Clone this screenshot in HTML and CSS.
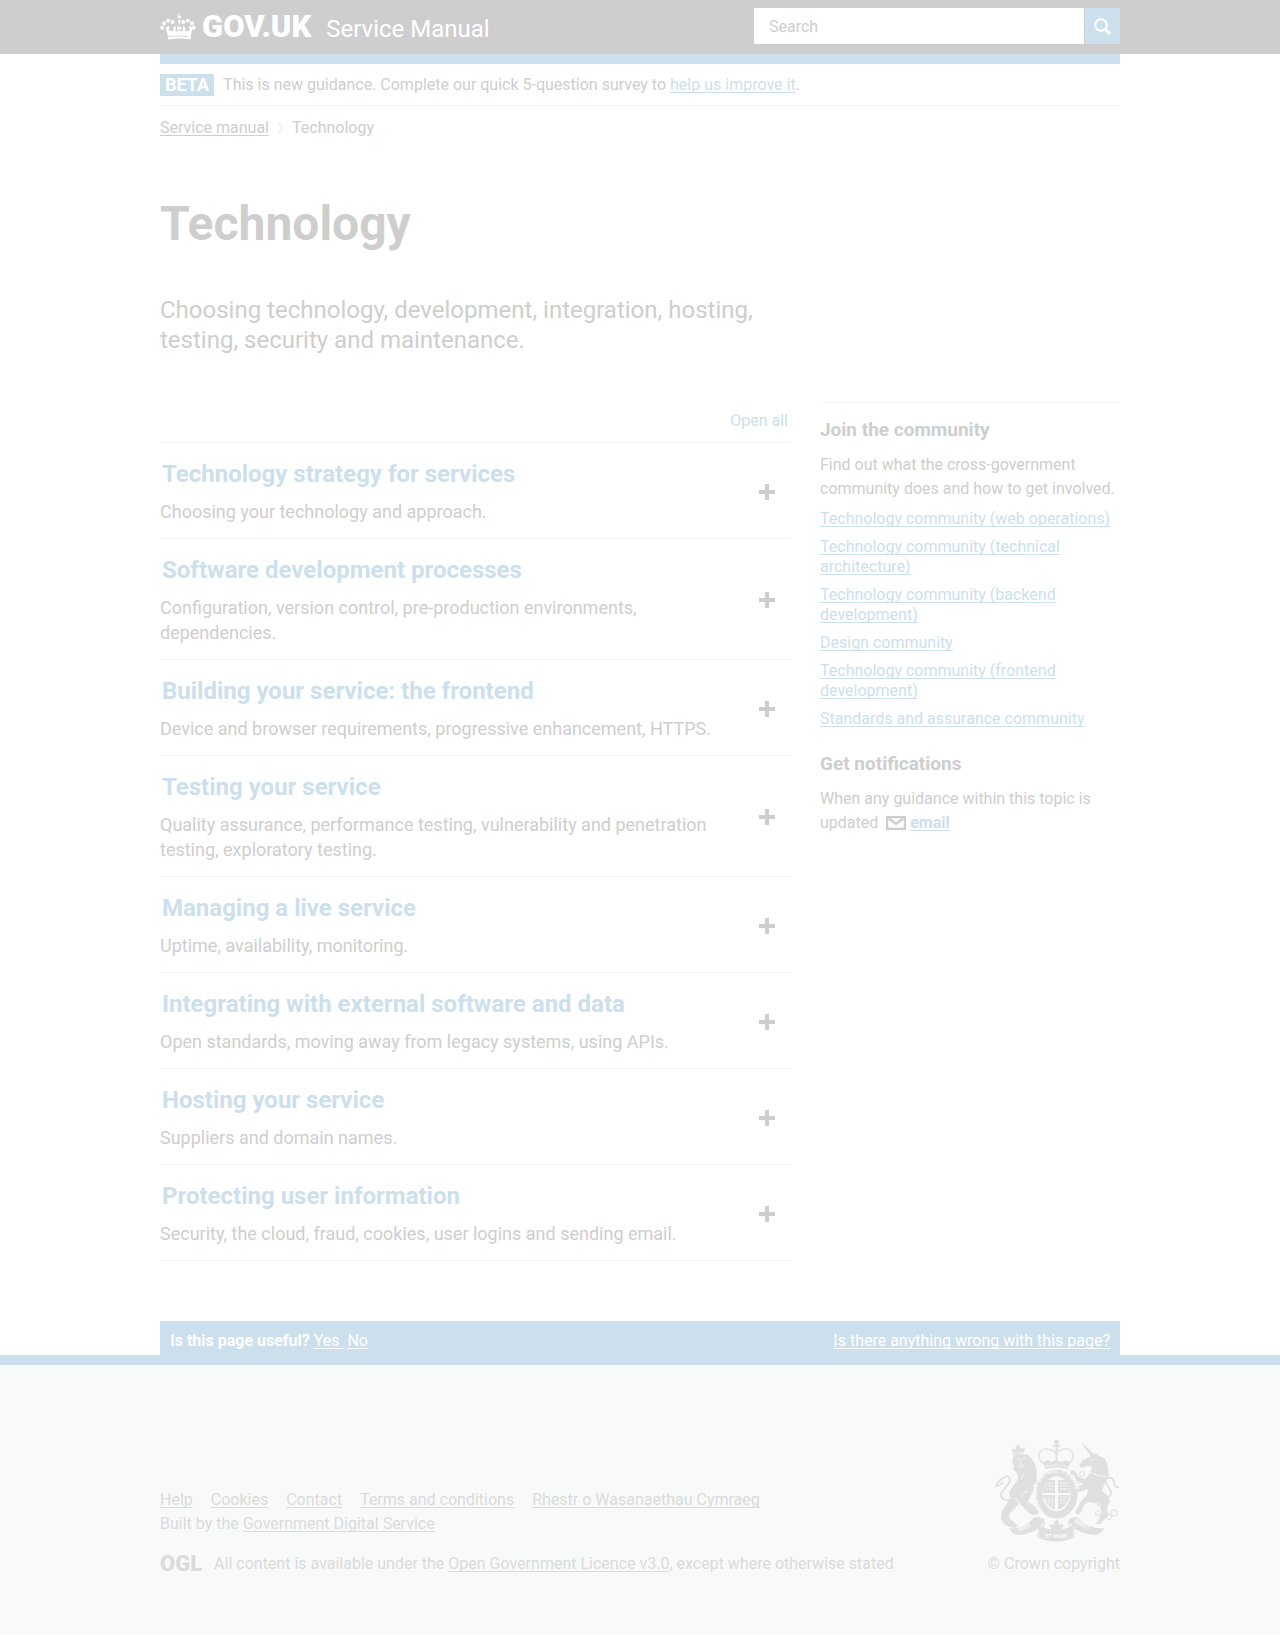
FILE: index.html
```html
<!DOCTYPE html>
<html lang="en">
<head>
<meta charset="utf-8">
<meta name="viewport" content="width=device-width, initial-scale=1">
<title>Technology - Service Manual - GOV.UK</title>
<link rel="stylesheet" href="styles.css">
</head>
<body>
<header class="header">
  <div class="container header-inner">
    <a class="brand" href="#">
      <svg class="crown" viewBox="0 0 36 27" aria-hidden="true">
        <g fill="currentColor">
          <circle cx="2.3" cy="13.7" r="2"/><circle cx="4" cy="9.3" r="2"/><circle cx="8.2" cy="6.8" r="2"/><circle cx="12.7" cy="8" r="1.9"/>
          <circle cx="33.7" cy="13.7" r="2"/><circle cx="32" cy="9.3" r="2"/><circle cx="27.8" cy="6.8" r="2"/><circle cx="23.3" cy="8" r="1.9"/>
          <path d="M16.8 0h2.400l-.5 2.200 2.300-.6v2.500l-2.300-.5.5 2.200c1 .4 1.500 1.100 1.500 2 0 1.100-.7 1.800-1.700 2.100l.4 3.300 1.900-1v3.800l-1.700-1c-.1 1.400.7 2.500 1.900 2.500 1.400 0 2.100-1.100 1.800-2.500l-1.100.2 1.300-3.400 2.500 2.700-1.100.1c0 1.500.7 2.700 2.200 2.700 1.700 0 2.700-1.200 2.900-2.800l-1.500.3 1.400-3.300 3 2.700c-1.300 2.500-2 7.200-2.600 11.300-3.400-.7-7-.9-11-.9s-7.600.2-11 .9c-.6-4.100-1.300-8.800-2.600-11.300l3-2.700 1.400 3.300-1.500-.3c.2 1.600 1.200 2.800 2.900 2.800 1.500 0 2.200-1.200 2.200-2.700l-1.100-.1 2.500-2.700 1.300 3.400-1.100-.2c-.3 1.400.4 2.500 1.800 2.500 1.200 0 2-1.100 1.900-2.500l-1.700 1v-3.800l1.900 1 .4-3.300c-1-.3-1.700-1-1.700-2.100 0-.9.5-1.600 1.500-2l.5-2.200-2.300.5V1.600l2.300.6z"/>
        </g>
        <path d="M7 22.800q11-1.700 22 0" fill="none" stroke="#cecece" stroke-width=".8"/>
      </svg>
      <span class="brand-name">GOV.UK</span>
    </a>
    <a class="product" href="#">Service Manual</a>
    <form class="search" role="search">
      <input class="search-input" type="search" placeholder="Search" aria-label="Search">
      <button class="search-button" type="button" aria-label="Search">
        <svg width="17" height="17" viewBox="0 0 17 17" fill="none" stroke="currentColor" aria-hidden="true"><circle cx="7" cy="7" r="5.800" stroke-width="2"/><path d="M11 11l5 5" stroke-width="3"/></svg>
      </button>
    </form>
  </div>
</header>

<div class="container">
  <div class="beta">
    <strong class="beta-tag">BETA</strong>
    <span>This is new guidance. Complete our quick 5-question survey to <a class="link" href="#">help us improve it</a>.</span>
  </div>
  <nav class="breadcrumbs" aria-label="Breadcrumb">
    <a href="#">Service manual</a>
    <svg width="7" height="12" viewBox="0 0 7 12" fill="none" stroke="#eeeff0" stroke-width="1.500" aria-hidden="true"><path d="M1 .5L5.500 6 1 11.500"/></svg>
    <span>Technology</span>
  </nav>

  <main>
    <h1 class="title">Technology</h1>
    <p class="lead">Choosing technology, development, integration, hosting, testing, security and maintenance.</p>

    <div class="columns">
      <div class="topics">
        <button class="open-all" type="button">Open all</button>
        <section class="topic">
          <div class="topic-text"><h2>Technology strategy for services</h2><p>Choosing your technology and approach.</p></div>
          <button class="plus" type="button" aria-label="Open Technology strategy for services"></button>
        </section>
        <section class="topic">
          <div class="topic-text"><h2>Software development processes</h2><p>Configuration, version control, pre-production environments, dependencies.</p></div>
          <button class="plus" type="button" aria-label="Open Software development processes"></button>
        </section>
        <section class="topic">
          <div class="topic-text"><h2>Building your service: the frontend</h2><p>Device and browser requirements, progressive enhancement, HTTPS.</p></div>
          <button class="plus" type="button" aria-label="Open Building your service: the frontend"></button>
        </section>
        <section class="topic">
          <div class="topic-text"><h2>Testing your service</h2><p>Quality assurance, performance testing, vulnerability and penetration testing, exploratory testing.</p></div>
          <button class="plus" type="button" aria-label="Open Testing your service"></button>
        </section>
        <section class="topic">
          <div class="topic-text"><h2>Managing a live service</h2><p>Uptime, availability, monitoring.</p></div>
          <button class="plus" type="button" aria-label="Open Managing a live service"></button>
        </section>
        <section class="topic">
          <div class="topic-text"><h2>Integrating with external software and data</h2><p>Open standards, moving away from legacy systems, using APIs.</p></div>
          <button class="plus" type="button" aria-label="Open Integrating with external software and data"></button>
        </section>
        <section class="topic">
          <div class="topic-text"><h2>Hosting your service</h2><p>Suppliers and domain names.</p></div>
          <button class="plus" type="button" aria-label="Open Hosting your service"></button>
        </section>
        <section class="topic">
          <div class="topic-text"><h2>Protecting user information</h2><p>Security, the cloud, fraud, cookies, user logins and sending email.</p></div>
          <button class="plus" type="button" aria-label="Open Protecting user information"></button>
        </section>
      </div>

      <aside class="aside">
        <h2>Join the community</h2>
        <p>Find out what the cross-government community does and how to get involved.</p>
        <ul class="community">
          <li><a class="link" href="#">Technology community (web operations)</a></li>
          <li><a class="link" href="#">Technology community (technical architecture)</a></li>
          <li><a class="link" href="#">Technology community (backend development)</a></li>
          <li><a class="link" href="#">Design community</a></li>
          <li><a class="link" href="#">Technology community (frontend development)</a></li>
          <li><a class="link" href="#">Standards and assurance community</a></li>
        </ul>
        <h2>Get notifications</h2>
        <p>When any guidance within this topic is
          <span class="subscribe">updated
          <svg class="envelope" width="20" height="14" viewBox="0 0 20 14" fill="none" stroke="currentColor" aria-hidden="true"><path d="M1 1h18v12H1z" stroke-width="2.500"/><path d="M3 2.500l7 5.500 7-5.500" stroke-width="2.500"/></svg>
          <a class="link email" href="#">email</a></span></p>
      </aside>
    </div>
  </main>

  <div class="feedback">
    <p><strong>Is this page useful?</strong> <a href="#">Yes&nbsp;</a> <a href="#">No</a></p>
    <a href="#">Is there anything wrong with this page?</a>
  </div>
</div>

<footer class="footer">
  <div class="container footer-inner">
    <div class="footer-meta">
      <ul class="footer-links">
        <li><a href="#">Help</a></li>
        <li><a href="#">Cookies</a></li>
        <li><a href="#">Contact</a></li>
        <li><a href="#">Terms and conditions</a></li>
        <li><a href="#">Rhestr o Wasanaethau Cymraeg</a></li>
      </ul>
      <p>Built by the <a href="#">Government Digital Service</a></p>
      <div class="licence">
        <a class="ogl" href="#">OGL</a>
        <p>All content is available under the <a href="#">Open Government Licence v3.0</a>, except where otherwise stated</p>
      </div>
    </div>
    <a class="copyright" href="#">
      <svg class="crest" width="125" height="102" viewBox="0 0 125 102" aria-hidden="true">
        <defs>
          <path id="garter" d="M49 72C38 62 39 33 61.500 33S85 62 74 72"/>
          <path id="scroll-left" d="M24 91Q33 89 41 82"/>
          <path id="scroll-right" d="M79 82Q89 89 101 91"/>
        </defs>
        <g fill="#dfe1e1">
          <!-- Lion -->
          <path d="M17 8l3 2 1-4 3-1 2 4 4-2-1 6-11 2z"/>
          <path d="M19 15l10-1 4 1 4 4 3 5 2 7-1 6 2 4-4 4 0 6-4 6-2 5 6 4 4 4 1 4-5 1-5-2-7-7-3-3-4 6-5 4-1 5 5 4 4 4-3 2-6-1-5-3-3-5 1-8 3-5 5-7-1-7 5-7 4-6-1-6-4-4 1-4-2-3z"/>
          <!-- Unicorn -->
          <path d="M86 2l14 13-3 3z"/>
          <path d="M97 16l4-3 3 3 5 2 3 5 1 6 1 6-3 4-2 6-2 6 6 5 2 6-3 5 1 7-4 5-3 5-5 0 3-5 3-6-2-6-5-4-7-1-4 3-2 6-4 4-3-3 2-3 4-8 6-6 1-6-9 3-4-2 1-3 8-3-7-3-3-5-4-1 0-4 4-1 5 7 6 2 5-6 2-6-4-1-6 2-3-2 4-6z"/>
          <!-- Ribbon -->
          <path d="M14 88q14 2 26-11l9 2q-3 14-26 16-7-1-9-7z"/>
          <path d="M109 88q-14 2-27-11l-8 2q3 14 26 16 7-1 9-7z"/>
          <path d="M43 86q18 7 36 0l1 11q-19 9-38 0z"/>
          <circle cx="61.500" cy="2" r="2.500"/><path d="M60.500 3h2v22h-2zM58 5h7v2h-7z"/>
          <path d="M48 22l5-2 3 2 5-2 6 2 3-2 5 2-2 7q-11-3-23 0z"/>
        </g>
        <g fill="none" stroke="#dfe1e1">
          <path d="M48 24q-7-8-2-13 7-5 15 2 8-7 15-2 5 5-2 13" stroke-width="1.800" stroke-dasharray="2 .5"/>
          <ellipse cx="61.500" cy="54" rx="17.500" ry="21" stroke-width="7"/>
          <path d="M17 60Q5 61 6 54C8 48 15 45 15 40q-1-6-7-2-6 4-7 8 4 0 7-4" stroke-width="1.800"/>
          <path d="M110 58q7-1 6-6C113 44 107 41 113 38q5-2 6 5 1 5 5 4" stroke-width="1.800"/>
          <circle cx="103" cy="73" r="2.500"/><circle cx="108" cy="77" r="2.500"/><circle cx="114" cy="77" r="2.500"/><circle cx="119" cy="73" r="3.200"/>
          <circle cx="87" cy="34" r="2.500"/><circle cx="84" cy="41" r="2.500"/>
          <path d="M41 78q8 0 8 5t-7 6M82 78q-8 0-8 5t7 6" stroke-width="1.500"/>
        </g>
        <g fill="#dfe1e1">
          <path d="M49 40h11v13H48zM63 40h11l1 13H63zM48 55h12v15q-9-3-12-15zM63 55h12q-3 12-12 15z"/>
          <path d="M61.500 79q4 4 2 7 3-4 5 0l-2 3h-3l1 4h-6l1-4h-3l-2-3q2-4 5 0-2-3 2-7z"/>
        </g>
        <g fill="none" stroke="#f8faf9">
          <path d="M50 43h7m-7 3h8m-7 3h7M65 57h7m-7 3h6m-6 3h5M66 42v8m3-8v9m3-9v8" stroke-width="1" stroke-dasharray="2 1"/>
          <path d="M51 57v7m3-7v9m3-9v11" stroke-width=".8"/>
          <path d="M49 27q12-4 25 0" stroke-width=".8"/>
          <path d="M94 31q7 5 16 5" stroke-width="1.300" stroke-dasharray="2 1"/>
          <path d="M18 13q6-2 11 0M22 19h3m3-1h3m-5 2l-1 4 4 2m-6 0l5 2M29 34l-3 6M20 58l5 6M95 20l2-1" stroke-width=".8"/>
          <path d="M17 70l5-4M101 62l5 3M33 51q-5 1-7 5" stroke-width=".8"/>
          <path d="M41 87q4 3 2 10M81 87q-4 3-2 10" stroke-width="1"/>
        </g>
        <g fill="#f8faf9" class="motto">
          <text><textPath href="#garter">HONI SOIT QUI MAL Y PENSE</textPath></text>
          <text><textPath href="#scroll-left">DIEU</textPath></text>
          <text><textPath href="#scroll-right">DROIT</textPath></text>
          <text x="61" y="98" text-anchor="middle">ET MON</text>
        </g>
      </svg>
      <span>© Crown copyright</span>
    </a>
  </div>
</footer>
</body>
</html>
```
FILE: styles.css
```css
:root {
  --ink: #cecece;
  --blue: #ccdfed;
  --rule: #f2f3f3;
  --footer-ink: #dadbdb;
  --footer-bg: #f8faf9;
}

* {
  box-sizing: border-box;
}

body,
h1,
h2,
p,
ul {
  margin: 0;
  padding: 0;
}

ul {
  list-style: none;
}

body {
  background: #fff;
  color: var(--ink);
  font: 16px/24px Roboto, "Liberation Sans", sans-serif;
}

a {
  color: inherit;
  text-underline-offset: 2px;
  text-decoration-skip-ink: none;
}

button {
  border: 0;
  padding: 0;
  font: inherit;
  cursor: pointer;
}

.container {
  width: calc(100% - 60px);
  max-width: 960px;
  margin: 0 auto;
}

.link {
  color: var(--blue);
}

/* Header */

.header {
  background: var(--ink);
  color: #fff;
}

.header-inner {
  display: flex;
  align-items: center;
  min-height: 54px;
}

.brand {
  display: flex;
  align-items: center;
  gap: 6px;
  text-decoration: none;
}

.crown {
  width: 36px;
  height: 27px;
}

.brand-name {
  font-size: 31px;
  line-height: 30px;
  font-weight: 900;
}

.product {
  margin-left: 15px;
  padding-top: 4px;
  font-size: 24px;
  line-height: 30px;
  text-decoration: none;
}

.search {
  display: flex;
  gap: 1px;
  width: 366px;
  margin: 8px 0 10px auto;
}

.search-input {
  flex: 1;
  min-width: 0;
  height: 36px;
  padding: 0 15px;
  border: 0;
  border-radius: 0;
  background: #fff;
  color: var(--ink);
  font: inherit;
  appearance: none;
}

.search-input::placeholder {
  color: var(--ink);
}

.search-button {
  display: grid;
  place-items: center;
  width: 35px;
  background: var(--blue);
  color: #fff;
}

/* Phase banner and breadcrumbs */

.beta {
  display: flex;
  align-items: center;
  gap: 9px;
  padding: 9px 0 8px;
  border-top: 10px solid var(--blue);
  border-bottom: 1px solid var(--rule);
}

.beta-tag {
  padding: 0 5px;
  background: var(--blue);
  color: #fff;
  font-size: 18px;
  line-height: 22px;
}

.breadcrumbs {
  display: flex;
  align-items: center;
  gap: 8px;
  padding-top: 10px;
}

/* Page heading */

.title {
  margin-top: 59px;
  font-size: 48px;
  line-height: 50px;
}

.lead {
  max-width: 630px;
  margin: 46px 0 47px;
  font-size: 24px;
  line-height: 30px;
}

.columns {
  display: grid;
  grid-template-columns: minmax(0, 1fr) 300px;
  gap: 30px;
  align-items: start;
}

/* Topic list */

.topics {
  display: flex;
  flex-direction: column;
  border-bottom: 1px solid var(--rule);
}

.open-all {
  align-self: flex-end;
  margin: 7px 2px 9px 0;
  background: none;
  color: var(--blue);
}

.topic {
  display: flex;
  align-items: center;
  justify-content: space-between;
  gap: 20px;
  padding: 16px 15px 14px 0;
  border-top: 1px solid var(--rule);
}

.topic-text {
  flex: 1;
}

.topic h2 {
  padding-left: 2px;
  color: var(--blue);
  font-size: 24px;
  line-height: 30px;
}

.topic p {
  margin-top: 10px;
  font-size: 18px;
  line-height: 25px;
}

.plus {
  flex: none;
  width: 16px;
  height: 16px;
  background:
    linear-gradient(var(--ink), var(--ink)) center / 16px 4px no-repeat,
    linear-gradient(var(--ink), var(--ink)) center / 4px 16px no-repeat;
}

/* Sidebar */

.aside {
  padding-top: 15px;
  border-top: 1px solid var(--rule);
}

.aside h2 {
  margin-bottom: 11px;
  font-size: 19px;
  line-height: 24px;
}

.community {
  display: grid;
  gap: 8px;
  margin: 8px 0 23px;
  line-height: 20px;
}

.subscribe {
  display: inline-block;
}

.envelope {
  margin-left: 4px;
  vertical-align: -2px;
}

.email {
  font-weight: bold;
}

/* Feedback bar */

.feedback {
  display: flex;
  justify-content: space-between;
  margin-top: 60px;
  padding: 8px 10px 2px;
  background: var(--blue);
  color: #fff;
}

/* Footer */

.footer {
  padding: 75px 0 58px;
  border-top: 10px solid var(--blue);
  background: var(--footer-bg);
  color: var(--footer-ink);
}

.footer-inner {
  display: flex;
  align-items: flex-end;
  justify-content: space-between;
}

.footer-links {
  display: flex;
  flex-wrap: wrap;
  gap: 0 18px;
}

.licence {
  display: flex;
  align-items: center;
  gap: 12px;
  margin-top: 16px;
}

.ogl {
  font-size: 22px;
  line-height: 24px;
  font-weight: 900;
  text-decoration: none;
}

.copyright {
  display: flex;
  flex-direction: column;
  align-items: flex-end;
  gap: 10px;
  text-decoration: none;
}

.motto {
  font-size: 6px;
  font-weight: bold;
}
```
